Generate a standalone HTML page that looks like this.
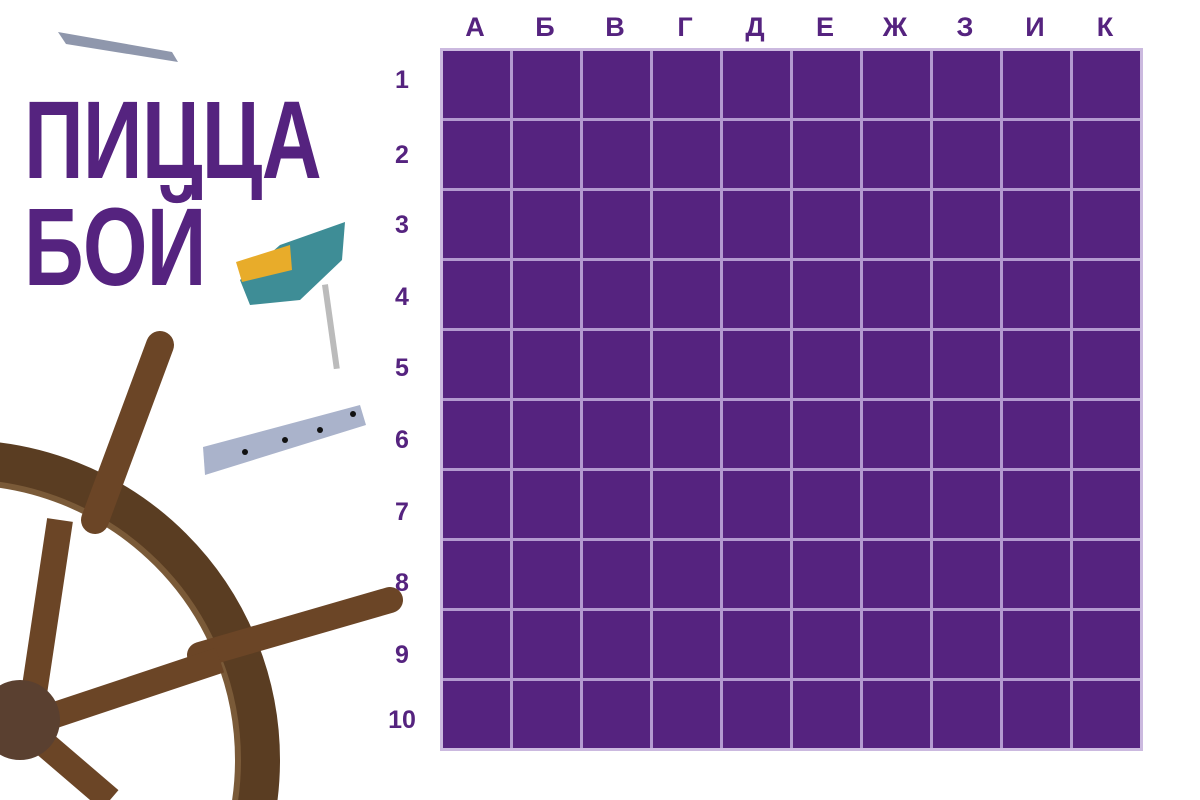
<!DOCTYPE html>
<html><head><meta charset="utf-8"><style>
html,body{margin:0;width:1200px;height:800px;overflow:hidden}
body{background:#fff;position:relative;font-family:"Liberation Sans",sans-serif}
.grid{position:absolute;left:440px;top:48px;width:697px;height:697px;background:#55237f;border:3px solid #cbb9df;
background-image:linear-gradient(to right,#b39ad0 0 3px,transparent 3px),linear-gradient(to bottom,#b39ad0 0 3px,transparent 3px);
background-size:70px 70px;background-position:-3px -3px}
.l{position:absolute;top:12px;width:70px;text-align:center;color:#55237f;font-weight:bold;font-size:27px}
.n{position:absolute;left:380px;width:44px;text-align:center;color:#55237f;font-weight:bold;font-size:25px}
.t{position:absolute;left:24px;color:#55237f;font-weight:bold;font-size:110px;line-height:110px;height:110px;transform:scaleX(.755);transform-origin:left top;letter-spacing:-1px;white-space:nowrap}
</style></head><body>
<div class="grid"></div>
<div class="l" style="left:440px">А</div><div class="l" style="left:510px">Б</div><div class="l" style="left:580px">В</div><div class="l" style="left:650px">Г</div><div class="l" style="left:720px">Д</div><div class="l" style="left:790px">Е</div><div class="l" style="left:860px">Ж</div><div class="l" style="left:930px">З</div><div class="l" style="left:1000px">И</div><div class="l" style="left:1070px">К</div>
<div class="n" style="top:66px">1</div><div class="n" style="top:141px">2</div><div class="n" style="top:211px">3</div><div class="n" style="top:283px">4</div><div class="n" style="top:354px">5</div><div class="n" style="top:426px">6</div><div class="n" style="top:498px">7</div><div class="n" style="top:569px">8</div><div class="n" style="top:641px">9</div><div class="n" style="top:706px">10</div>
<div class="t" style="top:86px">ПИЦЦА</div>
<div class="t" style="top:193px">БОЙ</div>
<svg style="position:absolute;left:0;top:0" width="440" height="800">
<polygon points="58,32 172,52 178,62 66,44" fill="#8f97ac"/>
<polygon points="203,447 360,405 366,425 205,475" fill="#aab3cb"/>
<circle cx="245" cy="452" r="3" fill="#111"/><circle cx="285" cy="440" r="3" fill="#111"/><circle cx="320" cy="430" r="3" fill="#111"/><circle cx="353" cy="414" r="3" fill="#111"/>
<polygon points="280,245 345,222 342,260 300,300 250,305 240,280" fill="#3e8d96"/>
<polygon points="236,262 290,245 292,270 242,282" fill="#e8ac2a"/>
<rect x="322" y="285" width="6" height="85" fill="#bbb" transform="rotate(-8 322 285)"/>
<circle cx="-40" cy="760" r="300" fill="none" stroke="#5a3d22" stroke-width="40"/>
<circle cx="-40" cy="760" r="278" fill="none" stroke="#7a5a38" stroke-width="6"/>
<path d="M160,345 L95,520" stroke="#6b4526" stroke-width="28" stroke-linecap="round"/>
<path d="M390,600 L200,655" stroke="#6b4526" stroke-width="26" stroke-linecap="round"/>
<path d="M60,520 L30,720" stroke="#6b4526" stroke-width="26"/>
<path d="M220,660 L40,720" stroke="#6b4526" stroke-width="26"/>
<path d="M40,740 L110,800" stroke="#6b4526" stroke-width="26"/>
<circle cx="20" cy="720" r="40" fill="#5a4030"/>
</svg>
</body></html>
